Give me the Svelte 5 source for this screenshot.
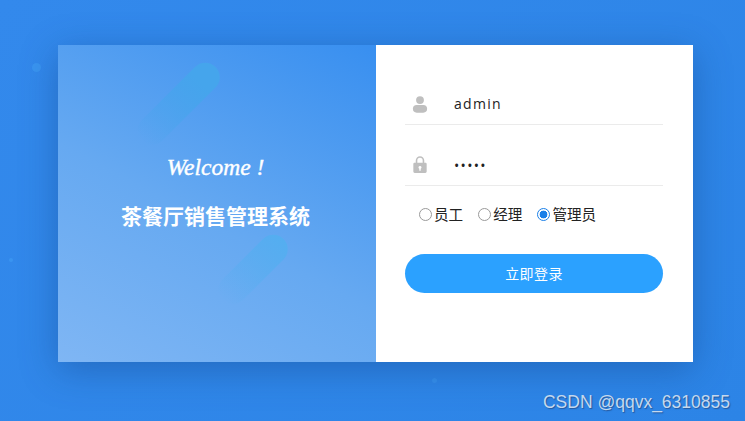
<script lang="ts">
	let username = $state('admin');
	let password = $state('12345');
	let role = $state('admin');

	const roles = [
		{ value: 'staff', label: '员工' },
		{ value: 'manager', label: '经理' },
		{ value: 'admin', label: '管理员' }
	];
</script>

<div class="page">
	<span class="dot dot-a"></span>
	<span class="dot dot-b"></span>
	<span class="dot dot-c"></span>

	<div class="card">
		<div class="intro">
			<span class="pill pill-top"></span>
			<span class="pill pill-bottom"></span>
			<p class="welcome">Welcome !</p>
			<h1>茶餐厅销售管理系统</h1>
		</div>

		<form class="login" onsubmit={(e) => e.preventDefault()}>
			<div class="field">
				<svg class="icon" viewBox="0 0 18 20" aria-hidden="true">
					<circle cx="9" cy="5" r="4.4" />
					<rect x="1" y="10.6" width="16" height="8.6" rx="4.3" />
				</svg>
				<input type="text" class="user" bind:value={username} />
			</div>
			<div class="field second">
				<svg class="icon lock" viewBox="0 0 18 20" aria-hidden="true">
					<path
						fill-rule="evenodd"
						d="M4.2 8V5.4a4.8 4.8 0 0 1 9.6 0V8h1.2c.9 0 1.500.6 1.500 1.500v8.500c0 .9-.6 1.500-1.500 1.500H3c-.9 0-1.500-.6-1.500-1.500V9.500c0-.9.6-1.500 1.500-1.500zM6 8h6V5.400a3 3 0 0 0-6 0zM9 11.600a1.700 1.700 0 0 0-.8 3.200V17h1.600v-2.200A1.700 1.700 0 0 0 9 11.600z"
					/>
				</svg>
				<input type="password" class="pass" bind:value={password} />
			</div>

			<div class="roles">
				{#each roles as r}
					<label>
						<input type="radio" name="role" value={r.value} bind:group={role} />
						<span>{r.label}</span>
					</label>
				{/each}
			</div>

			<button type="submit"><span>立即登录</span></button>
		</form>
	</div>

	<span class="mark">CSDN @qqvx_6310855</span>
</div>

<style>
	:global(body) {
		margin: 0;
	}

	.page {
		position: relative;
		box-sizing: border-box;
		height: 421px;
		width: 745px;
		overflow: hidden;
		padding: 45px 52px 59px 58px;
		background: linear-gradient(135deg, #3389ec 0%, #2c84e6 100%);
		font-family: 'Noto Sans CJK SC', 'Noto Sans', sans-serif;
	}

	.dot {
		position: absolute;
		border-radius: 50%;
		background: #3d9af2;
		opacity: 0.7;
	}

	.dot-a {
		left: 32px;
		top: 63px;
		width: 9px;
		height: 9px;
	}

	.dot-b {
		left: 9px;
		top: 258px;
		width: 4px;
		height: 4px;
	}

	.dot-c {
		left: 432px;
		top: 378px;
		width: 5px;
		height: 5px;
		opacity: 0.5;
	}

	.card {
		position: relative;
		display: flex;
		height: 317px;
		box-shadow: 0 8px 34px rgba(20, 70, 140, 0.45);
	}

	.intro {
		position: relative;
		width: 318px;
		overflow: hidden;
		box-sizing: border-box;
		padding: 107px 3px 0 0;
		text-align: center;
		color: #fff;
		background: linear-gradient(28deg, #7fb6f4 0%, #66a9f1 45%, #388ff0 100%);
	}

	.pill {
		position: absolute;
		width: 29px;
		border-radius: 15px;
		transform: rotate(45deg);
		transform-origin: top center;
	}

	.pill-top {
		left: 143px;
		top: 22px;
		height: 104px;
		background: linear-gradient(to bottom, #45a5ec 0%, #45a5ec 20%, rgba(69, 165, 236, 0) 100%);
	}

	.pill-bottom {
		left: 211px;
		top: 194px;
		height: 86px;
		background: linear-gradient(to bottom, #54aef0 0%, rgba(84, 174, 240, 0) 100%);
	}

	.welcome {
		position: relative;
		margin: 0;
		font-family: cursive, 'Liberation Serif', serif;
		font-style: italic;
		font-weight: 400;
		font-size: 23.500px;
		line-height: 30px;
		-webkit-text-stroke: 0.4px #fff;
	}

	h1 {
		position: relative;
		margin: 18px 0 0;
		font-size: 21px;
		line-height: 30px;
		font-weight: 700;
	}

	.login {
		flex: 1;
		display: flex;
		flex-direction: column;
		padding: 39px 30px 0 29px;
		background: #fff;
	}

	.field {
		display: flex;
		align-items: center;
		height: 40px;
		border-bottom: 1px solid #ebebeb;
	}

	.second {
		margin-top: 20px;
	}

	.icon {
		flex: none;
		width: 16px;
		height: 19px;
		margin-left: 7px;
		fill: #bfbfbf;
	}

	.lock {
		margin-bottom: 2px;
	}

	.field input {
		flex: 1;
		min-width: 0;
		margin-left: 26px;
		padding: 0;
		border: 0;
		outline: 0;
		background: transparent;
		color: #222;
		font-family: 'Open Sans', 'Noto Sans', sans-serif;
		font-size: 14px;
		letter-spacing: 1.3px;
	}

	.field .user {
		padding-bottom: 2px;
	}

	.roles {
		display: flex;
		gap: 15px;
		align-items: center;
		height: 20px;
		margin-top: 18px;
		padding-left: 14px;
	}

	.roles label {
		display: flex;
		align-items: center;
		font-size: 14.600px;
		line-height: 20px;
		color: #222;
	}

	.roles input {
		appearance: none;
		box-sizing: border-box;
		width: 13px;
		height: 13px;
		margin: 0 2px 0 0;
		border: 1.5px solid #9a9a9a;
		border-radius: 50%;
		background: #fff;
	}

	.roles input:checked {
		border-color: #1a7fe8;
		background: radial-gradient(circle, #1a7fe8 0 3.6px, #fff 4.2px);
	}

	button {
		height: 39px;
		margin-top: 30px;
		padding: 0 0 1px;
		border: 0;
		border-radius: 20px;
		background: #2ba1ff;
		color: #fff;
		font-family: inherit;
		font-size: 14px;
		letter-spacing: 0.4px;
		cursor: pointer;
	}

	.mark {
		position: absolute;
		right: 15px;
		bottom: 9px;
		color: #c4d8ee;
		font-family: 'Liberation Sans', sans-serif;
		font-size: 17.500px;
		line-height: 20px;
		text-shadow: 1px 1px 1px rgba(30, 60, 110, 0.6);
	}
</style>
